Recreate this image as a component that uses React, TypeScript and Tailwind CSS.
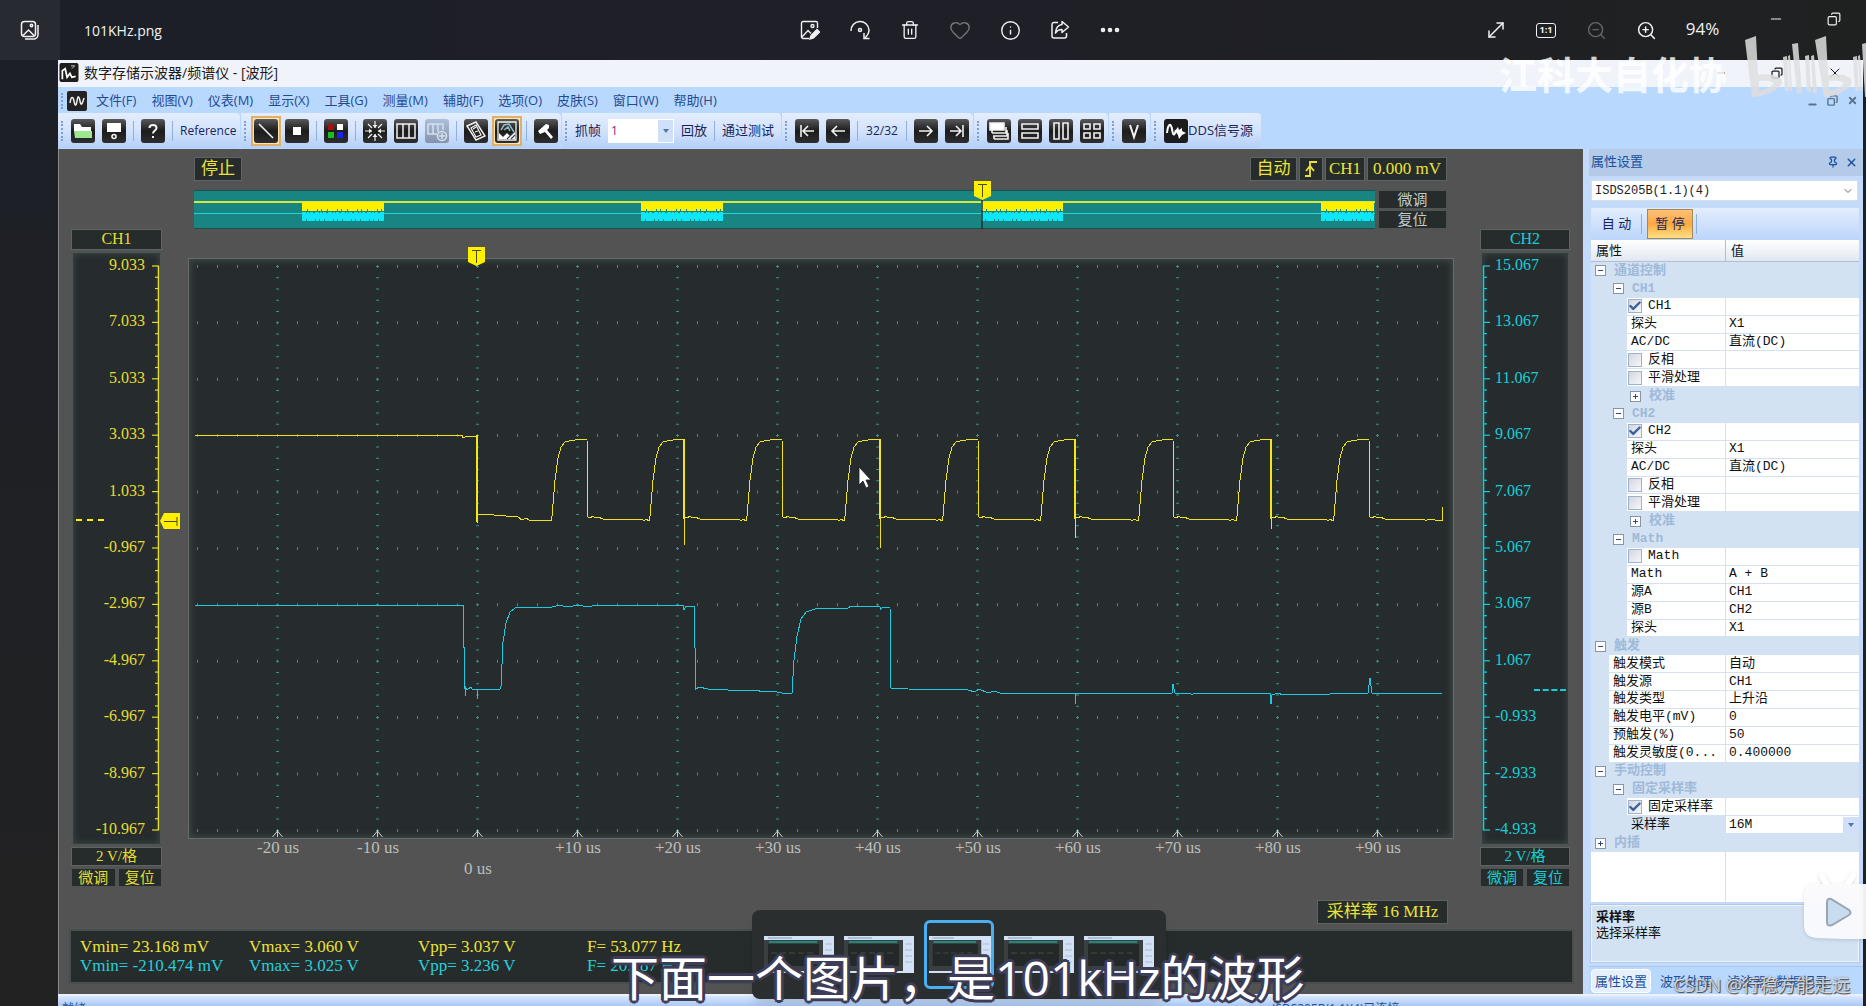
import type { ReactNode } from "react"
import {
  Check,
  ChevronDown,
  Copy,
  Ellipsis,
  Heart,
  Info,
  Minus,
  MoveDiagonal,
  Pin,
  Trash2,
  X,
  ZoomIn,
  ZoomOut,
} from "lucide-react"

const menus = [
  "文件(F)",
  "视图(V)",
  "仪表(M)",
  "显示(X)",
  "工具(G)",
  "测量(M)",
  "辅助(F)",
  "选项(O)",
  "皮肤(S)",
  "窗口(W)",
  "帮助(H)",
]

const ch1Labels = ["9.033", "7.033", "5.033", "3.033", "1.033", "-0.967", "-2.967", "-4.967", "-6.967", "-8.967", "-10.967"]
const ch2Labels = ["15.067", "13.067", "11.067", "9.067", "7.067", "5.067", "3.067", "1.067", "-0.933", "-2.933", "-4.933"]
const timeLabels = ["-20 us", "-10 us", "0 us", "+10 us", "+20 us", "+30 us", "+40 us", "+50 us", "+60 us", "+70 us", "+80 us", "+90 us"]

const measurements = [
  { channel: "CH1", color: "text-[#ece337]", values: ["Vmin= 23.168 mV", "Vmax= 3.060 V", "Vpp= 3.037 V", "F= 53.077 Hz"] },
  { channel: "CH2", color: "text-[#25cfdc]", values: ["Vmin= -210.474 mV", "Vmax= 3.025 V", "Vpp= 3.236 V", "F= 20.787 Hz"] },
]

type Row =
  | { kind: "group"; level: 0 | 1 | 2; name: string; open: boolean }
  | { kind: "check"; name: string; checked: boolean }
  | { kind: "value"; name: string; value: string; wide?: boolean }
  | { kind: "select"; name: string; value: string }

const channelRows = (name: string): Row[] => [
  { kind: "group", level: 1, name, open: true },
  { kind: "check", name, checked: true },
  { kind: "value", name: "探头", value: "X1" },
  { kind: "value", name: "AC/DC", value: "直流(DC)" },
  { kind: "check", name: "反相", checked: false },
  { kind: "check", name: "平滑处理", checked: false },
  { kind: "group", level: 2, name: "校准", open: false },
]

const rows: Row[] = [
  { kind: "group", level: 0, name: "通道控制", open: true },
  ...channelRows("CH1"),
  ...channelRows("CH2"),
  { kind: "group", level: 1, name: "Math", open: true },
  { kind: "check", name: "Math", checked: false },
  { kind: "value", name: "Math", value: "A + B" },
  { kind: "value", name: "源A", value: "CH1" },
  { kind: "value", name: "源B", value: "CH2" },
  { kind: "value", name: "探头", value: "X1" },
  { kind: "group", level: 0, name: "触发", open: true },
  { kind: "value", name: "触发模式", value: "自动", wide: true },
  { kind: "value", name: "触发源", value: "CH1", wide: true },
  { kind: "value", name: "触发类型", value: "上升沿", wide: true },
  { kind: "value", name: "触发电平(mV)", value: "0", wide: true },
  { kind: "value", name: "预触发(%)", value: "50", wide: true },
  { kind: "value", name: "触发灵敏度(0...", value: "0.400000", wide: true },
  { kind: "group", level: 0, name: "手动控制", open: true },
  { kind: "group", level: 1, name: "固定采样率", open: true },
  { kind: "check", name: "固定采样率", checked: true },
  { kind: "select", name: "采样率", value: "16M" },
  { kind: "group", level: 0, name: "内插", open: false },
]

// Plot traces, in the 1266x581 space of the graticule
const pulses = [
  { rise: 363, fall: 399, spike: 0 },
  { rise: 461, fall: 496, spike: 287 },
  { rise: 558, fall: 594, spike: 0 },
  { rise: 656, fall: 692, spike: 290 },
  { rise: 754, fall: 790, spike: 0 },
  { rise: 852, fall: 887, spike: 280 },
  { rise: 950, fall: 985, spike: 0 },
  { rise: 1048, fall: 1083, spike: 271 },
  { rise: 1145, fall: 1181, spike: 0 },
]

const ch1Path =
  "M7 177 H274 L275 180 L279 178 H289 V265 V256 H294 L330 259 L334 262 L338 260 L341 262 H363" +
  pulses
    .map(
      (p) =>
        ` L${p.rise} 263 L${p.rise + 1} 258 L${p.rise + 4} 222 L${p.rise + 7} 200 L${p.rise + 10} 189` +
        ` L${p.rise + 14} 184 L${p.rise + 18} 183 L${p.rise + 24} 182 L${p.rise + 26} 181 H${p.fall}` +
        (p.spike ? ` V${p.spike} V259` : ` L${p.fall + 1} 259`) +
        ` L${p.fall + 4} 260 L${p.fall + 5} 258 L${p.fall + 9} 260 L${p.fall + 11} 259 L${p.fall + 16} 261 H${p.fall + 55} L${p.fall + 57} 263 L${p.fall + 59} 261`,
    )
    .join("") +
  " L1254 263 L1255 249"

const ch2Path =
  "M7 347 H275 L277 431 V438 V428 L279 432 L283 429 L284 431 H289 V441 V431 H312 L313 428 L315 384 L318 365 L322 354 L327 350" +
  " L336 349 H364 L372 347 L378 349 L392 347 L398 349 L410 347 H440 L442 348 L458 347 H495 L496 352 L498 348 H506 L508 431" +
  " L511 429 L520 431 L560 433 L568 432 L575 434 L584 433 L594 435 H604 L606 402 L609 378 L613 361 L618 354 L627 351 L660 350" +
  " L663 348 L692 349 V352 L695 349 H702 L703 430 L720 431 L780 432 L787 434 L791 431 L800 435 L806 433 L812 435 H887 V446" +
  " V435 H984 L985 426 L987 435 H1002 L1004 437 L1006 435 H1082 L1083 446 L1084 437 L1090 435 L1095 437 L1120 436 L1125 437" +
  " L1160 435 H1180 L1182 420 L1184 435 H1254"

function BitmapIcon({ children, label, active, faded }: { children: ReactNode; label: string; active?: boolean; faded?: boolean }) {
  return (
    <button
      type="button"
      aria-label={label}
      className={active ? "-m-[3px] border-2 border-[#dfb06a] bg-[#ffe2ad] p-px" : ""}
    >
      <span
        className={
          faded
            ? "block h-6 w-6 rounded-[3px] bg-gradient-to-b from-[#aebfd9] to-[#8493ab]"
            : "block h-6 w-6 rounded-[3px] bg-gradient-to-b from-[#5a5a5a] via-[#1c1c1c] to-[#2e2e2e]"
        }
      >
        <svg viewBox="0 0 24 24" className="h-6 w-6" fill="none" stroke="#f2f2f2" strokeWidth="1.6">
          {children}
        </svg>
      </span>
    </button>
  )
}

function Divider() {
  return <span className="h-5 w-px bg-[#8fb0dd]" />
}

function ToolGroup({ children, className = "pr-1" }: { children: ReactNode; className?: string }) {
  return (
    <div
      className={`flex h-[35px] items-center gap-[7px] rounded-r bg-gradient-to-b from-[#e3edfd] via-[#d3e3fc] to-[#b4cff8] pt-px pl-[3px] ${className}`}
    >
      <span className="h-5 w-[3px] border-l-2 border-dotted border-[#7d9fd2]" />
      {children}
    </div>
  )
}

function PhotoBar() {
  return (
    <header className="flex h-[60px] items-stretch bg-gradient-to-r from-[#1c1f26] via-[#1f1f28] to-[#1f2121] text-[#f1f1f3]">
      <button type="button" aria-label="图库" className="flex w-[60px] items-center justify-center bg-[#272a31]">
        <svg viewBox="0 0 20 20" className="h-5 w-5" fill="none" stroke="currentColor" strokeWidth="1.500">
          <rect x="1.500" y="1.500" width="14" height="15" rx="3" />
          <path d="M18 5V14.500A4.500 4.500 0 0 1 13.500 19H5" />
          <path d="M3 15.500L8.500 10L14 15.500" />
          <circle cx="11.500" cy="5.500" r="1.200" />
        </svg>
      </button>
      <h1 className="flex-1 self-center pl-6 text-[14px]">101KHz.png</h1>
      <div className="flex">
        <button type="button" aria-label="编辑" className="flex w-[50px] items-center justify-center">
          <svg viewBox="0 0 20 20" className="h-5 w-5" fill="none" stroke="currentColor" strokeWidth="1.4">
            <path d="M9 18.500H3A1.500 1.500 0 0 1 1.500 17V3A1.500 1.500 0 0 1 3 1.500H16A1.500 1.500 0 0 1 17.500 3V8" />
            <circle cx="12.500" cy="6" r="1.500" />
            <path d="M2 17L8 10.500L11 13.500" />
            <path d="M10 19L11 15.500L17 9.500L19.500 12L13.500 18Z" fill="currentColor" />
          </svg>
        </button>
        <button type="button" aria-label="旋转" className="flex w-[50px] items-center justify-center">
          <svg viewBox="0 0 20 20" className="h-5 w-5" fill="none" stroke="currentColor" strokeWidth="1.500">
            <path d="M1 11A9 9 0 0 1 19 10C19 13 17.500 15.500 15 18" />
            <path d="M14 13V18.500H19.500" />
            <circle cx="10" cy="10" r="1.500" />
          </svg>
        </button>
        <button type="button" aria-label="删除" className="flex w-[50px] items-center justify-center">
          <Trash2 className="h-5 w-5" strokeWidth={1.6} />
        </button>
        <button type="button" aria-label="收藏" className="flex w-[50px] items-center justify-center text-[#77777d]">
          <Heart className="h-[22px] w-[22px]" strokeWidth={1.5} />
        </button>
        <button type="button" aria-label="信息" className="flex w-[50px] items-center justify-center">
          <Info className="h-[21px] w-[21px]" strokeWidth={1.6} />
        </button>
        <button type="button" aria-label="共享" className="flex w-[50px] items-center justify-center">
          <svg viewBox="0 0 20 20" className="h-5 w-5" fill="none" stroke="currentColor" strokeWidth="1.500" strokeLinejoin="round">
            <path d="M8 2.500H4A2 2 0 0 0 2 4.500V16A2 2 0 0 0 4 18H14.500A2 2 0 0 0 16.500 16V13" />
            <path d="M12 1.500L18.500 7L12 12.500V9.500C9 9.500 7 10.500 5.500 13C5.800 8.500 8 5 12 4.500Z" />
          </svg>
        </button>
        <button type="button" aria-label="更多" className="flex w-[50px] items-center justify-center">
          <Ellipsis className="h-6 w-6" strokeWidth={2.6} />
        </button>
      </div>
      <div className="flex w-[731px] justify-end pr-[3px]">
        <button type="button" aria-label="全屏" className="flex w-[50px] items-center justify-center">
          <MoveDiagonal className="h-6 w-6" strokeWidth={1.5} />
        </button>
        <button type="button" aria-label="实际大小" className="flex w-[50px] items-center justify-center">
          <span className="flex h-[15px] w-5 items-center justify-center rounded-[3px] border border-current text-[9px] font-bold">1:1</span>
        </button>
        <button type="button" aria-label="缩小" className="flex w-[50px] items-center justify-center text-[#66666a]">
          <ZoomOut className="h-[21px] w-[21px]" strokeWidth={1.6} />
        </button>
        <button type="button" aria-label="放大" className="flex w-[50px] items-center justify-center">
          <ZoomIn className="h-[21px] w-[21px]" strokeWidth={1.7} />
        </button>
        <span className="w-[63px] self-center pb-[2px] text-center text-[17px]">94%</span>
        <button type="button" aria-label="最小化" className="ml-[13px] flex h-[38px] w-[58px] items-center justify-center">
          <Minus className="h-4 w-4" strokeWidth={1.5} />
        </button>
        <button type="button" aria-label="还原" className="flex h-[38px] w-[58px] items-center justify-center">
          <Copy className="h-[14px] w-[14px] -scale-x-100" strokeWidth={2} />
        </button>
      </div>
    </header>
  )
}

function MenuBar() {
  return (
    <nav className="flex h-[26px] items-center bg-[#b9d8fe] pt-px pr-[5px] pl-[3px] text-[13px] text-[#1f4b92]">
      <span className="h-4 w-[3px] border-l-2 border-dotted border-[#7d9fd2]" />
      <svg viewBox="0 0 20 20" className="ml-[3px] h-5 w-5">
        <rect width="20" height="20" rx="2" fill="#222" />
        <path d="M3 12C4 5 6 5 7 10S9 16 10 10S12 5 13 10S15 14 17 7" fill="none" stroke="#eee" strokeWidth="1.500" />
      </svg>
      <ul className="ml-[9px] flex flex-1 gap-[15px]">
        {menus.map((menu) => (
          <li key={menu}>
            <button type="button">{menu}</button>
          </li>
        ))}
      </ul>
      <div className="flex gap-[9px] text-[#5b728f]">
        <Minus className="h-[11px] w-[11px] translate-y-1" strokeWidth={4} />
        <Copy className="h-[11px] w-[11px] -scale-x-100" strokeWidth={3} />
        <X className="h-[11px] w-[11px]" strokeWidth={4} />
      </div>
    </nav>
  )
}

function Toolbar() {
  return (
    <div className="flex h-9 gap-px bg-[#b9d8fe] text-[13px] text-[#17245c]">
      <ToolGroup>
        <BitmapIcon label="打开">
          <path d="M3 5H9L11 8H20V12H3Z" fill="#fff" stroke="none" />
          <path d="M3 12H21V19H4Z" fill="#9be88e" stroke="none" />
        </BitmapIcon>
        <BitmapIcon label="保存">
          <path d="M5 4H19V13H5Z" fill="#fff" stroke="none" />
          <circle cx="12" cy="17.500" r="2" />
        </BitmapIcon>
        <Divider />
        <BitmapIcon label="帮助">
          <path d="M8.500 9C8.500 5 15.500 5 15.500 9C15.500 11.500 12 11.500 12 14.500M12 17V19" strokeWidth="2" />
        </BitmapIcon>
        <Divider />
        <button type="button" className="w-14 text-[12px]">Reference</button>
      </ToolGroup>
      <ToolGroup className="pr-[3px]">
        <BitmapIcon label="线" active>
          <path d="M5 5L19 19" />
        </BitmapIcon>
        <BitmapIcon label="点">
          <path d="M8 8H16V16H8Z" fill="#fff" stroke="none" />
        </BitmapIcon>
        <Divider />
        <BitmapIcon label="颜色">
          <g stroke="none">
            <path d="M4 5H10V11H4Z" fill="#a31212" />
            <path d="M13 5H19V11H13Z" fill="#fff" />
            <path d="M4 13H10V19H4Z" fill="#12c21e" />
            <path d="M13 13H19V19H13Z" fill="#1a24f0" />
          </g>
        </BitmapIcon>
        <Divider />
        <BitmapIcon label="居中">
          <path d="M12 2V9M12 22V15M2 12H9M22 12H15M5 5L9 9M19 5L15 9M5 19L9 15M19 19L15 15" strokeWidth="1.200" />
          <path d="M9.500 6L12 9L14.500 6ZM9.500 18L12 15L14.500 18ZM6 9.500L9 12L6 14.500ZM18 9.500L15 12L18 14.500Z" fill="#f2f2f2" stroke="none" />
        </BitmapIcon>
        <BitmapIcon label="分栏">
          <path d="M3 5H21V19H3ZM9 5V19M15 5V19" strokeWidth="1.500" />
        </BitmapIcon>
        <BitmapIcon label="添加分栏" faded>
          <g stroke="#d3deee">
            <path d="M3 5H18V11M3 5V15H12M8 5V15M13 5V13" />
            <circle cx="17" cy="17" r="4.500" />
            <path d="M17 14V20M14 17H20" />
          </g>
        </BitmapIcon>
        <Divider />
        <BitmapIcon label="标尺">
          <path d="M3 7L12 3L21 17L12 21Z" strokeWidth="1.400" />
          <path d="M7 9L12 6L17 16L12 18ZM9 10L12 8M11 13L14 12" strokeWidth="1.200" />
        </BitmapIcon>
        <BitmapIcon label="波形显示" active>
          <path d="M3 3H21V21H3Z" strokeWidth="1.300" />
          <path d="M6 11L9 6L14 5L19 13M9 11L13 8L15 12" stroke="#8fb9c7" strokeWidth="1.500" />
          <path d="M4 14L8 18L12 14L15 17L20 13V20H4Z" fill="#fff" stroke="none" />
          <path d="M12 20L18 14M16 20L20 16" stroke="#345" strokeWidth="1.200" />
        </BitmapIcon>
        <Divider />
        <BitmapIcon label="设置">
          <path d="M4 12L12 5L15 6L15 9L13 11L19 18L17 20L11 13L6 15Z" fill="#fff" stroke="none" />
        </BitmapIcon>
      </ToolGroup>
      <ToolGroup className="pr-[7px]">
        <label htmlFor="frame">抓帧</label>
        <div className="flex h-6 w-[66px] bg-white">
          <input id="frame" defaultValue="1" className="w-0 flex-1 pl-[3px] text-[12px] text-[#7a2a7a] outline-none" />
          <button type="button" aria-label="选择帧" className="flex w-[17px] items-center justify-center border border-white bg-[#cfe0f8]">
            <span className="border-x-[3px] border-t-4 border-x-transparent border-t-[#5273b0]" />
          </button>
        </div>
        <button type="button">回放</button>
        <Divider />
        <button type="button">通过测试</button>
      </ToolGroup>
      <ToolGroup>
        <BitmapIcon label="第一帧">
          <path d="M6 6V18M19 12H8M13 7L8 12L13 17" />
        </BitmapIcon>
        <BitmapIcon label="上一帧">
          <path d="M19 12H6M11 7L6 12L11 17" />
        </BitmapIcon>
        <Divider />
        <span className="w-[34px] text-center text-[12px]">32/32</span>
        <Divider />
        <BitmapIcon label="下一帧">
          <path d="M5 12H18M13 7L18 12L13 17" />
        </BitmapIcon>
        <BitmapIcon label="最后一帧">
          <path d="M18 6V18M5 12H16M11 7L16 12L11 17" />
        </BitmapIcon>
      </ToolGroup>
      <ToolGroup>
        <BitmapIcon label="层叠">
          <path d="M3 4H17V11H3Z" fill="#fff" />
          <path d="M5 14H19V8M6 17H20V11M7 20H21V14M5 11V14M7 17V20" />
        </BitmapIcon>
        <BitmapIcon label="横向平铺">
          <path d="M4 5H20V10H4ZM4 14H20V19H4Z" />
        </BitmapIcon>
        <BitmapIcon label="纵向平铺">
          <path d="M5 4H10V20H5ZM14 4H19V20H14Z" />
        </BitmapIcon>
        <BitmapIcon label="网格">
          <path d="M4 5H10V10H4ZM14 5H20V10H14ZM4 14H10V19H4ZM14 14H20V19H14Z" />
        </BitmapIcon>
      </ToolGroup>
      <ToolGroup>
        <BitmapIcon label="电压">
          <path d="M8 6L12 18L16 6" strokeWidth="2" />
        </BitmapIcon>
      </ToolGroup>
      <ToolGroup className="pr-2">
        <button type="button" className="flex items-center">
          <svg viewBox="0 0 24 24" className="h-6 w-6" fill="none" stroke="#fff" strokeWidth="2">
            <rect width="24" height="24" rx="3" fill="#1c1c1c" stroke="none" />
            <path d="M3 14C4 4 7 4 8 10S10 18 12 11" />
            <path d="M11 12L14 8L15 11L18 9L18 12L22 14L18 16L15 20L14 16Z" fill="#fff" stroke="none" />
          </svg>
          DDS信号源
        </button>
      </ToolGroup>
    </div>
  )
}

function Readout({ children, className = "" }: { children: ReactNode; className?: string }) {
  return <div className={`border border-[#5e6464] bg-[#262c2c] text-center whitespace-nowrap ${className}`}>{children}</div>
}

function TriggerFlag({ className }: { className: string }) {
  return (
    <svg viewBox="0 0 17 19" className={`absolute h-[19px] w-[17px] ${className}`}>
      <path d="M0 0H17V15L8.500 19L0 15Z" fill="#fff000" />
      <path d="M4 3.500H13M8.500 3.500V16" stroke="#4d4a10" strokeWidth="1" />
    </svg>
  )
}

function Overview() {
  const bursts = [108, 447, 787, 1127]
  return (
    <svg viewBox="0 0 1181 39" preserveAspectRatio="none" className="block h-[39px] w-full">
      <rect width="1181" height="39" fill="#198582" />
      <path d="M0 0.500H1181M0 38.500H1181" stroke="#1d4f50" />
      <path d="M0 12H1181" stroke="#d8e83a" strokeWidth="2" />
      <path d="M0 23.500H1181" stroke="#22d3d8" />
      {bursts.map((x) => (
        <g key={x}>
          <rect x={x} y="12" width={Math.min(82, 1180 - x)} height="7" fill="#fff000" />
          <path d={`M${x} 20H${Math.min(x + 82, 1180)}`} stroke="#fff000" strokeWidth="2" strokeDasharray="5 1 9 1 3 1" />
          <rect x={x} y="24" width={Math.min(82, 1180 - x)} height="5" fill="#0ce6f7" />
          <path d={`M${x} 23.500H${Math.min(x + 82, 1180)}`} stroke="#0ce6f7" strokeWidth="3" strokeDasharray="4 1 2 1 3 2" />
          <path d={`M${x} 30H${Math.min(x + 82, 1180)}`} stroke="#0ce6f7" strokeWidth="2" strokeDasharray="4 1 8 1 3 1" />
        </g>
      ))}
      <path d="M788 10V39" stroke="#173536" strokeWidth="1.500" />
    </svg>
  )
}

function Graticule() {
  const columns = Array.from({ length: 12 }, (_, i) => 89.5 + i * 100)
  const lines = Array.from({ length: 11 }, (_, i) => 8.4 + i * 56.4)
  return (
    <svg viewBox="0 0 1266 581" preserveAspectRatio="none" className="block h-[581px] w-full bg-[#262c2d] shadow-[inset_0_0_6px_3px_#3d4646]">
      <rect x="0.500" y="0.500" width="1265" height="580" fill="none" stroke="#646c6c" />
      {lines.map((y) => (
        <path key={y} d={`M9 ${y}H1256`} stroke="#3f8f86" strokeWidth="3" strokeDasharray="1 19" />
      ))}
      {columns.map((x) => (
        <path key={x} d={`M${x} 7.900V573`} stroke="#3f8f86" strokeWidth="3" strokeDasharray="1 10.280" />
      ))}
      {columns.map((x) => (
        <path key={x} d={`M${x} 572V579M${x - 5} 579L${x} 573L${x + 5} 579`} stroke="#c9d2cf" fill="none" />
      ))}
      <g fill="none" shapeRendering="crispEdges">
        <path d={ch1Path} stroke="#efe41c" />
        <path d={ch2Path} stroke="#1ccbe0" />
        <path d="M289 177V264M496 181V261M692 181V261M887 181V261M1083 181V261" stroke="#f2e71a" strokeWidth="2" />
      </g>
    </svg>
  )
}

function Ticks({ right }: { right?: boolean }) {
  const ticks = Array.from({ length: 51 }, (_, i) => i)
  return (
    <svg viewBox="0 0 8 580" className={right ? "h-[580px] w-2 -scale-x-100" : "h-[580px] w-2"} stroke="currentColor">
      <path d="M6.500 8V572" strokeWidth="1.500" />
      {ticks.map((i) => (
        <path key={i} d={`M${i % 5 ? 3 : 0} ${8 + i * 11.28}H7`} strokeWidth="1.200" />
      ))}
    </svg>
  )
}

function ChannelColumn({ name, labels, right }: { name: string; labels: string[]; right?: boolean }) {
  return (
    <section
      className={
        right
          ? "relative mt-[80px] mr-[13px] ml-[26px] w-[90px] text-[#17ced8]"
          : "relative mt-[80px] ml-[13px] w-[91px] text-[#e4dc33]"
      }
    >
      <Readout className="h-[21px] text-[16px] leading-[18px]">{name}</Readout>
      <div
        className={
          right
            ? "mt-px flex h-[595px] flex-row-reverse justify-end gap-[5px] border-2 border-[#4c5454] bg-[#262c2d] pt-[5px] shadow-[inset_0_0_6px_1px_#3d4646]"
            : "mt-px flex h-[595px] justify-end gap-[7px] border-2 border-[#4c5454] bg-[#262c2d] pt-[5px] shadow-[inset_0_0_6px_1px_#3d4646]"
        }
      >
        <div
          className={
            right
              ? "-mt-px flex h-[580px] flex-col justify-between text-[16px] leading-4"
              : "-mt-px flex h-[580px] flex-col justify-between text-right text-[16px] leading-4"
          }
        >
          {labels.map((label) => (
            <span key={label}>{label}</span>
          ))}
        </div>
        <Ticks right={right} />
      </div>
      <Readout className="mt-px h-[19px] text-[15px] leading-4">2 V/格</Readout>
      <div className="mt-[2px] grid grid-cols-2 gap-[2px] text-[15px]">
        <button type="button" className="h-[19px] border border-[#4c5454] bg-[#262c2c] leading-[14px]">微调</button>
        <button type="button" className="h-[19px] border border-[#4c5454] bg-[#262c2c] leading-[14px]">复位</button>
      </div>
      {right ? (
        <span className="absolute top-[460px] right-1 w-8 border-t-2 border-dashed border-current" />
      ) : (
        <>
          <span className="absolute top-[290px] left-[5px] w-7 border-t-2 border-dashed border-[#fff000]" />
          <svg viewBox="0 0 20 16" className="absolute top-[284px] left-[89px] h-4 w-5">
            <path d="M20 0H4L0 8L4 16H20Z" fill="#fff000" />
            <path d="M4 8.500H17M17 4V13" stroke="#4d4a10" />
          </svg>
        </>
      )}
    </section>
  )
}

function Scope() {
  return (
    <main className="flex min-w-0 flex-1 flex-col border-l border-[#8a8a8a] bg-[#535353] pb-[10px] font-['Liberation_Serif','Noto_Sans_CJK_SC',serif]">
      <div className="-ml-px flex">
        <ChannelColumn name="CH1" labels={ch1Labels} />
        <section className="ml-[26px] min-w-0 flex-1 pt-2">
          <div className="flex justify-between pr-[7px] pl-[6px] text-[17px] leading-[21px] text-[#ece337]">
            <Readout className="h-6 w-12">停止</Readout>
            <div className="flex gap-[2px]">
              <Readout className="h-6 w-[47px]">自动</Readout>
              <Readout className="flex h-6 w-6 items-center justify-center">
                <svg viewBox="0 0 14 18" className="h-[18px] w-[14px]" fill="none" stroke="currentColor" strokeWidth="1.800">
                  <path d="M1 16H6V2H13M2 11L6 6L10 11" />
                </svg>
              </Readout>
              <Readout className="h-6 w-10">CH1</Readout>
              <Readout className="h-6 w-20">0.000 mV</Readout>
            </div>
          </div>
          <div className="relative mt-[9px] flex gap-[3px] pr-[7px] pl-[6px]">
            <div className="min-w-0 flex-1">
              <Overview />
            </div>
            <div className="flex w-[69px] flex-col gap-px text-[15px] text-[#c3cbc8]">
              <button type="button" className="h-[19px] border border-[#4c5454] bg-[#262c2c] leading-[14px]">微调</button>
              <button type="button" className="h-[19px] border border-[#4c5454] bg-[#262c2c] leading-[14px]">复位</button>
            </div>
            <TriggerFlag className="-top-[9px] left-[786px]" />
          </div>
          <div className="relative mt-[29px]">
            <Graticule />
            <TriggerFlag className="-top-[11px] left-[280px]" />
            <svg viewBox="0 0 14 24" className="absolute top-[208px] left-[670px] h-6 w-[14px]">
              <path d="M1 1V19L5 15L8 22L11 20.500L8 14H13Z" fill="#fff" stroke="#1b1f20" strokeWidth="0.800" />
            </svg>
          </div>
          <div className="grid grid-cols-12 pr-[26px] pl-[40px] text-center text-[17px] leading-[18px] text-[#b9bebc]">
            {timeLabels.map((label) => (
              <span key={label} className={label === "0 us" ? "pt-[21px]" : ""}>
                {label}
              </span>
            ))}
          </div>
        </section>
        <ChannelColumn name="CH2" labels={ch2Labels} right />
      </div>
      <div className="mt-[13px] flex justify-end pr-[135px] text-[17px] leading-[22px] text-[#ece337]">
        <Readout className="h-6 w-[131px]">采样率 16 MHz</Readout>
      </div>
      <div className="mt-[5px] mr-[9px] ml-[10px] h-[55px] border-2 border-[#474e4e] bg-[#262c2c] pt-[6px] pl-[9px] text-[17px] leading-[19px]">
        {measurements.map((m) => (
          <div key={m.channel} className={`grid grid-cols-[169px_169px_169px_169px] whitespace-nowrap ${m.color}`}>
            {m.values.map((value) => (
              <span key={value}>{value}</span>
            ))}
          </div>
        ))}
      </div>
    </main>
  )
}

function PropertyName({ row, id }: { row: Row; id: string }) {
  if (row.kind !== "check") return <>{row.name}</>
  return (
    <label htmlFor={id} className="flex items-center gap-[6px]">
      <span className="grid">
        <input
          id={id}
          type="checkbox"
          defaultChecked={row.checked}
          className="peer col-start-1 row-start-1 h-[14px] w-[14px] appearance-none border border-[#9fb2cc] bg-gradient-to-br from-[#d3d6de] to-[#f7f8fb]"
        />
        <Check className="pointer-events-none invisible col-start-1 row-start-1 h-[14px] w-[14px] text-[#3a5f9b] peer-checked:visible" strokeWidth={4} />
      </span>
      {row.name}
    </label>
  )
}

function PropertyTable() {
  return (
    <table className="h-[612px] w-full table-fixed border-separate border-spacing-0 text-left font-['Liberation_Mono','Noto_Sans_CJK_SC',monospace] text-[13px] leading-4 text-[#111]">
      <colgroup>
        <col className="w-[135px]" />
        <col />
      </colgroup>
      <thead>
        <tr className="h-[22px] bg-gradient-to-b from-white to-[#dfe6f1]">
          <th className="h-[22px] border-r border-b border-[#b3bfce] pt-[2px] pb-0 pl-[5px] font-normal">属性</th>
          <th className="h-[22px] border-b border-[#b3bfce] pt-[2px] pb-0 pl-[5px] font-normal">值</th>
        </tr>
      </thead>
      <tbody>
        {rows.map((row, i) => {
          if (row.kind === "group") {
            const indent = row.level === 0 ? "pl-1" : row.level === 1 ? "pl-[22px]" : "pl-[39px]"
            return (
              <tr key={i} className="h-[17px] bg-[#d2e2f3]">
                <td colSpan={2} className={`py-0 ${indent}`}>
                  <button type="button" className="flex items-center gap-2 font-bold text-[#9fb9d9]">
                    <span className="relative flex h-[11px] w-[11px] items-center justify-center border border-[#8895a8] bg-white">
                      <span className="h-px w-[5px] bg-[#2d4a85]" />
                      {!row.open && <span className="absolute h-[5px] w-px bg-[#2d4a85]" />}
                    </span>
                    {row.name}
                  </button>
                </td>
              </tr>
            )
          }
          const wide = row.kind === "value" && row.wide
          return (
            <tr key={i} className={row.kind === "select" ? "h-[17px] bg-[#d2e2f3]" : "h-[17px] bg-white"}>
              <td
                className={
                  wide
                    ? "overflow-hidden border-r border-b border-l-[18px] border-[#d2e2f3] py-0 pl-1 whitespace-nowrap"
                    : row.kind === "check"
                      ? "overflow-hidden border-r border-b border-l-[36px] border-[#d2e2f3] py-0 pl-px whitespace-nowrap"
                      : "overflow-hidden border-r border-b border-l-[36px] border-[#d2e2f3] py-0 pl-1 whitespace-nowrap"
                }
              >
                <PropertyName row={row} id={`prop-${i}`} />
              </td>
              <td className="border-b border-[#d2e2f3] bg-white py-0 pl-[3px]">
                {row.kind === "value" && row.value}
                {row.kind === "select" && (
                  <div className="flex">
                    <select aria-label={row.name} className="h-4 flex-1 appearance-none outline-none">
                      <option>{row.value}</option>
                    </select>
                    <span className="flex w-4 items-center justify-center bg-[#cfe0f8]">
                      <span className="border-x-[3px] border-t-4 border-x-transparent border-t-[#5273b0]" />
                    </span>
                  </div>
                )}
              </td>
            </tr>
          )
        })}
      </tbody>
    </table>
  )
}

function PropertyPanel() {
  return (
    <aside className="flex w-[280px] flex-col bg-[#c3dafb] pl-[6px] text-[13px]">
      <div className="flex h-[27px] items-center bg-[#b3cbe9] pr-[5px] pb-px pl-[2px] text-[#1c4f9c]">
        <h2 className="flex-1">属性设置</h2>
        <Pin className="h-3 w-3" strokeWidth={2.5} />
        <X className="ml-[6px] h-[13px] w-[13px]" strokeWidth={2.5} />
      </div>
      <div className="mt-1 mr-[5px] ml-[2px] grid items-center">
        <select
          aria-label="设备"
          className="col-start-1 row-start-1 h-[21px] appearance-none border border-[#d5dfec] bg-white pl-[3px] font-['Liberation_Mono',monospace] text-[12px] text-[#222] outline-none"
        >
          <option>ISDS205B(1.1)(4)</option>
        </select>
        <ChevronDown className="pointer-events-none col-start-1 row-start-1 mr-1 h-3 w-3 justify-self-end text-[#666]" />
      </div>
      <div className="mt-[7px] mr-1 ml-[2px] flex h-8 items-center bg-gradient-to-b from-[#e3edfd] to-[#bcd5fa] pl-[9px] text-[#17245c]">
        <button type="button" className="w-[33px] whitespace-pre">自 动</button>
        <span className="ml-2 h-5 w-px bg-[#8fb0dd]" />
        <button type="button" className="ml-[5px] h-[30px] w-[46px] border border-[#a08a5c] bg-gradient-to-b from-[#fbc078] via-[#fda83e] to-[#ffe084] whitespace-pre">
          暂 停
        </button>
        <span className="ml-[3px] h-5 w-px bg-[#8fb0dd]" />
      </div>
      <div className="mr-1 ml-[2px]">
        <PropertyTable />
        <div className="grid h-[50px] grid-cols-[135px_1fr] bg-white">
          <span className="border-r border-[#d2e2f3]" />
        </div>
        <div className="mt-[3px] h-[57px] border border-[#eaf2fc] bg-[#d2e2f3] pt-[2px] pl-1 text-[#111] shadow-[0_0_0_1px_#b3cbe9]">
          <p className="font-bold leading-4">采样率</p>
          <p className="leading-4">选择采样率</p>
        </div>
      </div>
      <div className="mt-1 flex flex-1 items-center border-t border-[#a9c5ea] bg-[#b9d8fe] pl-[2px] text-[13px] leading-5 text-[#1c4f9c]">
        <button type="button" className="h-6 w-[60px] rounded border border-white bg-[#e6effc]">属性设置</button>
        <button type="button" className="ml-[9px]">波形处理</button>
        <button type="button" className="ml-[15px]">滤波器</button>
        <button type="button" className="ml-[10px]">数据记录</button>
      </div>
    </aside>
  )
}

function Thumb({ className }: { className: string }) {
  return (
    <svg viewBox="0 0 70 37" preserveAspectRatio="none" className={className}>
      <rect width="70" height="37" fill="#d3e1f6" />
      <rect y="4" width="59" height="31" fill="#3b3f40" />
      <rect x="4" y="8" width="51" height="22" fill="#232828" />
      <rect x="5" y="5" width="48" height="2" fill="#1d8a7c" />
      <path d="M4 2H28" stroke="#8a96a8" />
      <path d="M7 17H50" stroke="#4a4b38" strokeDasharray="6 3" />
      <path d="M61 8H68M61 14H68M61 20H68M61 26H68" stroke="#a9b9d4" />
    </svg>
  )
}

function FilmStrip() {
  return (
    <div className="absolute bottom-[7px] left-[752px] flex h-[89px] w-[414px] items-center rounded-lg bg-[#2b2e2f] pl-3 shadow-lg">
      <Thumb className="h-[37px] w-[70px]" />
      <Thumb className="ml-[10px] h-[37px] w-[70px]" />
      <div className="ml-[10px] flex h-[69px] w-[70px] items-center justify-end rounded-md border-[3px] border-[#4aaef2] pl-[2px]">
        <Thumb className="h-[37px] w-full" />
      </div>
      <Thumb className="ml-[10px] h-[37px] w-[70px]" />
      <Thumb className="ml-[10px] h-[37px] w-[70px]" />
    </div>
  )
}

function Watermarks() {
  return (
    <>
      <p className="pointer-events-none absolute top-[53px] right-[139px] text-[38px] leading-[42px] font-bold whitespace-nowrap text-white/80">
        江科大自化协
      </p>
      <svg viewBox="0 0 126 72" className="pointer-events-none absolute top-[30px] right-0 h-[72px] w-[126px]" fill="#dedede" fillOpacity="0.85">
        <path d="M5 10L16 6L18 45C29 43 41 45 42 52C40 60 24 67 12 67Z M19 51V61C26 59 32 57 34 53C30 50 23 50 19 51Z" fillRule="evenodd" />
        <path d="M43 27L47 26L49 61H45ZM48 26L50 25L52 61H50ZM52 14L58 13L62 63H57ZM65 26L69 25L71 62H67ZM71 26L74 25L77 63H73Z" />
        <path d="M75 10L86 6L88 45C99 43 111 45 112 52C110 60 96 67 84 67Z M89 51V61C96 59 102 57 104 53C100 50 93 50 89 51Z" fillRule="evenodd" />
        <path d="M113 27L117 26L119 61H115ZM118 26L120 25L122 61H120ZM122 14L126 13V67H125Z" />
      </svg>
      <svg viewBox="0 0 62 66" className="pointer-events-none absolute right-0 bottom-[67px] h-[66px] w-[62px] drop-shadow">
        <path d="M18 3L24 14M49 3L42 14" stroke="#fff" strokeWidth="6" strokeLinecap="round" />
        <path d="M62 11H12Q0 11 0 23V52Q0 64 12 65L40 66H62Z" fill="#fbfbfd" fillOpacity="0.95" />
        <path d="M23 29Q23 25 27 26L45 37Q48 40 45 42L28 52Q23 54 23 49Z" fill="#c8dcf0" stroke="#9aa5b3" strokeWidth="2" />
      </svg>
      <p className="pointer-events-none absolute right-4 bottom-[7px] text-[18px] leading-7 whitespace-nowrap text-white/70 [text-shadow:1px_1px_1px_#444,0_0_2px_#777]">
        CSDN @行稳方能走远
      </p>
      <p className="pointer-events-none absolute bottom-[-2px] left-[611px] text-[48px] leading-[60px] whitespace-nowrap text-white [text-shadow:2px_2px_0_#3d3d58,-2px_-2px_0_#3d3d58,2px_-2px_0_#3d3d58,-2px_2px_0_#3d3d58,3px_0_0_#3d3d58,-3px_0_0_#3d3d58,0_3px_0_#3d3d58,0_-3px_0_#3d3d58]">
        下面一个图片，是101kHz的波形
      </p>
    </>
  )
}

export default function App() {
  return (
    <div className="relative flex min-h-screen flex-col overflow-hidden bg-gradient-to-b from-[#1c1f27] to-[#222222] font-['Open_Sans','Noto_Sans_CJK_SC',sans-serif]">
      <PhotoBar />
      <div className="mr-[3px] ml-[58px] flex flex-1 flex-col">
        <div className="flex h-[27px] items-center bg-[#f0f3fa] pr-5 pb-[2px] text-[14px] text-[#1a1a1a]">
          <svg viewBox="0 0 20 20" className="ml-px h-[19px] w-5">
            <rect width="20" height="20" rx="2" fill="#1d1d1d" />
            <path d="M3 17V8L6 6L8 15L11 11L13 15L17 14" fill="none" stroke="#fff" strokeWidth="1.800" />
            <path d="M12 3H16L13 6" fill="none" stroke="#ccc" />
          </svg>
          <span className="flex-1 pl-[5px]">数字存储示波器/频谱仪 - [波形]</span>
          <div className="flex items-center gap-11">
            <Minus className="h-3 w-3" strokeWidth={2} />
            <Copy className="h-3 w-3 -scale-x-100" strokeWidth={2.5} />
            <X className="h-4 w-4" strokeWidth={1.5} />
          </div>
        </div>
        <MenuBar />
        <Toolbar />
        <div className="flex flex-1">
          <Scope />
          <PropertyPanel />
        </div>
        <footer className="flex h-3 overflow-hidden border-t-2 border-[#e9f1fd] bg-gradient-to-b from-[#dbe8fc] to-[#a9c8f6] text-[12px] leading-4 text-[#1c4f9c]">
          <span className="w-[1214px] pt-[5px] pl-1">就绪</span>
          <span className="pt-[5px]">ISDS205B(1.1)(4)已连接</span>
        </footer>
      </div>
      <FilmStrip />
      <Watermarks />
    </div>
  )
}
